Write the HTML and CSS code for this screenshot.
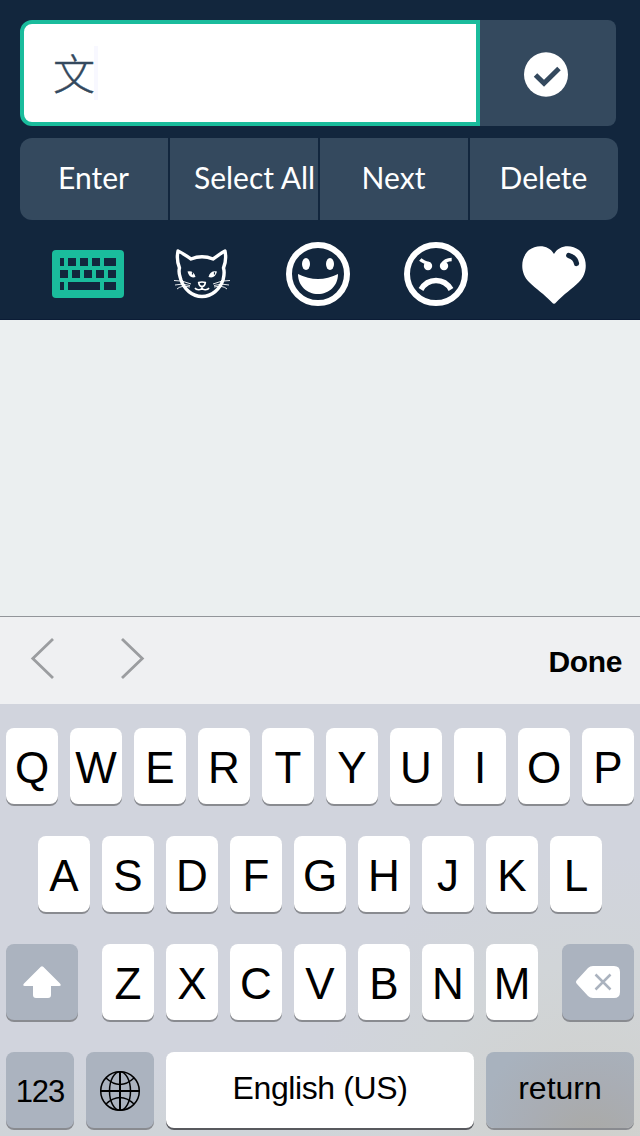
FILE: index.html
```html
<!DOCTYPE html>
<html lang="en">
<head>
<meta charset="utf-8">
<title>Keyboard input</title>
<link rel="stylesheet" href="styles.css">
</head>
<body>
<div class="app">
  <header class="panel">
    <div class="entry">
      <div class="field"><span class="typed">文</span><span class="caret"></span></div>
      <div class="confirm">
        <svg width="44" height="45" viewBox="0 0 44 45"><ellipse cx="22" cy="22.500" rx="22" ry="22.300" fill="#fff"/><path d="M11.500 23L20 31.200L35 16.500" fill="none" stroke="#34495e" stroke-width="5"/></svg>
      </div>
    </div>
    <div class="actions">
      <div class="action">Enter</div>
      <div class="action action-wide">Select All</div>
      <div class="action">Next</div>
      <div class="action">Delete</div>
    </div>
    <div class="tabs">
      <svg class="tab-keyboard" width="72" height="48" viewBox="0 0 72 48"><rect width="72" height="48" rx="4" fill="#1abc9c"/><path fill="#12263d" d="M8 8h4v8H8zM16 8h8v8h-8zM28 8h8v8h-8zM40 8h8v8h-8zM52 8h12v8H52zM8 20h8v8H8zM20 20h8v8h-8zM32 20h8v8h-8zM44 20h8v8h-8zM56 20h8v8h-8zM8 32h4v8H8zM16 32h32v8H16zM52 32h12v8H52z"/></svg>
      <svg class="tab-cat" width="56" height="52" viewBox="0 0 56 52"><path d="M5.500 20C3 14 3 8 4 3C9 5 13 8.500 17 11Q28 6.500 39 11C43 8.500 47 5 51 3C52 8 52 14 49.500 20C51 25 50 28 49 32C46 41 38 48.500 28 48.500C18 48.500 10 41 7 32C6 28 4 25 5.500 20Z" fill="none" stroke="#fff" stroke-width="3.400" stroke-linejoin="round"/><path d="M13.500 23.500Q20 22.500 21.500 29Q15.500 31 13.500 23.500ZM43 23.500Q36 22.500 34.500 29Q41 31 43 23.500Z" fill="#fff"/><path d="M18.500 24.300v2.200M40.500 24.300v2.200" stroke="#12263d" stroke-width="1.200"/><path d="M24.700 34.600Q28 33.400 31.300 34.600Q31 38 28 38.600Q25 38 24.700 34.600ZM28 38.600V40Q27 42 24.500 41.800T21 40M28 40Q29 42 31.500 41.800T35 40" fill="none" stroke="#fff" stroke-width="1.600"/><path d="M17 36Q8 32 0 32.500M16 37.500Q8 35 1 37M16 39Q7 37 3 41M39 36Q48 32 56 32.500M40 37.500Q48 35 55 37M40 39Q49 37 53 41" fill="none" stroke="#fff" stroke-width=".9"/></svg>
      <svg class="tab-smile" width="64" height="64" viewBox="0 0 64 64"><circle cx="32" cy="32" r="29" fill="none" stroke="#fff" stroke-width="6"/><ellipse cx="20" cy="22" rx="4" ry="6" fill="#fff"/><ellipse cx="44" cy="22" rx="4" ry="6" fill="#fff"/><path d="M12 32Q32 42 52 32C52 44 43 52 32 52S12 44 12 32Z" fill="#fff"/></svg>
      <svg class="tab-angry" width="64" height="64" viewBox="0 0 64 64"><circle cx="32" cy="32" r="29" fill="none" stroke="#fff" stroke-width="6"/><g fill="none" stroke="#fff"><path d="M16.300 17.500Q19 20 26 22M47.700 17.500Q41 17.500 38 23" stroke-width="3.400"/><path d="M17 47.500C24 35.500 40 35.500 47 47.500" stroke-width="5.500"/></g><circle cx="24" cy="24" r="4.200" fill="#fff"/><circle cx="40" cy="24" r="4.200" fill="#fff"/></svg>
      <svg class="tab-heart" width="64" height="58" viewBox="0 0 64 58"><path d="M32 8C37-1 49-2 57 4C66 12 66 27 57 36C50 43 42 48 34 56.500Q32 59 30 56.500C22 48 14 43 7 36C-2 27-2 12 7 4C15-2 27-1 32 8Z" fill="#fff"/><path d="M46.700 9.500Q53.500 11.500 54.500 17.500" fill="none" stroke="#12263d" stroke-width="5.200" stroke-linecap="round"/></svg>
    </div>
  </header>
  <main class="blank"></main>
  <div class="toolbar">
    <svg width="150" height="44" viewBox="0 0 150 44" fill="none" stroke="#9b9da0" stroke-width="2.800"><path d="M53 2L32.800 21.500L53 41M122 2L142.300 21.500L122 41"/></svg>
    <span class="done">Done</span>
  </div>
  <div class="keyboard">
    <div class="row">
      <div class="key">Q</div><div class="key">W</div><div class="key">E</div><div class="key">R</div><div class="key">T</div><div class="key">Y</div><div class="key">U</div><div class="key">I</div><div class="key">O</div><div class="key">P</div>
    </div>
    <div class="row">
      <div class="key">A</div><div class="key">S</div><div class="key">D</div><div class="key">F</div><div class="key">G</div><div class="key">H</div><div class="key">J</div><div class="key">K</div><div class="key">L</div>
    </div>
    <div class="row row-spread">
      <div class="key dark side"><svg width="38" height="32" viewBox="0 0 38 32"><path d="M17.800.8Q19-.4 20.200.8L37 17.500Q39 20 36 20H28V29Q28 32 25 32H13Q10 32 10 29V20H2Q-1 20 1 17.500Z" fill="#fff"/></svg></div>
      <div class="letters"><div class="key">Z</div><div class="key">X</div><div class="key">C</div><div class="key">V</div><div class="key">B</div><div class="key">N</div><div class="key">M</div></div>
      <div class="key dark side"><svg width="44" height="32" viewBox="0 0 44 32"><path d="M17 0H38Q44 0 44 6V26Q44 32 38 32H17Q14 32 12 30L1 18Q-1 16 1 14L12 2Q14 0 17 0Z" fill="#fff"/><path d="M19.500 8.500L34.500 23.500M34.500 8.500L19.500 23.500" stroke="#abb3bf" stroke-width="2.500"/></svg></div>
    </div>
    <div class="row">
      <div class="key dark mode">123</div>
      <div class="key dark mode"><svg width="42" height="42" viewBox="0 0 42 42" fill="none" stroke="#000" stroke-width="1.500"><circle cx="21" cy="21" r="19.300"/><ellipse cx="21" cy="21" rx="10.500" ry="19.300"/><path d="M7 8Q21 21 35 8M7 34Q21 21 35 34"/><path d="M21 1v40M1 21h40" stroke-width="2"/></svg></div>
      <div class="key space">English (US)</div>
      <div class="key dark return">return</div>
    </div>
  </div>
</div>
</body>
</html>
```
FILE: styles.css
```css
* { box-sizing: border-box; }
body { margin: 0; font-family: "Liberation Sans", Arial, sans-serif; }
svg { display: block; flex: none; }
.app { width: 640px; height: 1136px; overflow: hidden; display: flex; flex-direction: column; }

.panel { height: 320px; background: #12263d; padding: 20px 22px 0 20px; border-bottom: 1px solid #0b1c36; }
.entry { display: flex; width: 596px; height: 106px; }
.field { width: 460px; border: 4px solid #1abc9c; border-radius: 12px 0 0 12px; background: #fff; display: flex; align-items: center; padding-left: 29px; }
.typed { font: 300 42px/60px "Noto Sans CJK SC", sans-serif; color: #34495e; margin-top: -3px; -webkit-text-stroke: .4px #34495e; }
.caret { width: 4px; height: 54px; background: #f8f8ff; margin-left: -1px; margin-top: -1px; }
.confirm { flex: 1; background: #34495e; border-radius: 0 8px 8px 0; display: flex; align-items: center; padding: 3px 0 0 44px; }
.actions { display: flex; gap: 2px; margin-top: 12px; height: 82px; border-radius: 12px; overflow: hidden; }
.action { width: 148px; background: #34495e; color: #fff; font: 30px/78px Lato, sans-serif; text-align: center; padding-right: 1px; }
.action-wide { padding-left: 24px; text-align: left; white-space: nowrap; }
.tabs { display: flex; align-items: flex-start; height: 98px; padding: 22px 0 0 32px; }
.tab-keyboard { margin-top: 8px; }
.tab-cat { margin: 6px 0 0 50px; }
.tab-smile { margin-left: 56px; }
.tab-angry { margin-left: 54px; }
.tab-heart { margin: 4px 0 0 54px; }

.blank { height: 296px; background: #ebeff0; }
.toolbar { height: 88px; background: #eff0f2; border-top: 1px solid #92959a; display: flex; justify-content: space-between; align-items: center; padding-right: 18px; }
.toolbar svg { margin-top: -4px; }
.done { font-size: 30px; font-weight: bold; letter-spacing: -.4px; padding-top: 2px; }

.keyboard { height: 432px; padding: 24px 6px 0; display: flex; flex-direction: column; gap: 32px; background: radial-gradient(circle at 590px 440px, #d0d0cc 0, #d1d5d8 180px, rgba(209, 212, 221, 0) 290px), linear-gradient(#d1d4dd 0, #d1d4dd 84%, #cfd4d8 100%); }
.row { display: flex; justify-content: center; gap: 12px; height: 76px; flex: none; }
.row-spread { justify-content: space-between; }
.letters { display: flex; gap: 12px; }
.key { width: 52px; height: 76px; border-radius: 8px; background: #fff; box-shadow: 0 2px 0 #898b90; color: #000; font-size: 44px; line-height: 79px; text-align: center; white-space: nowrap; }
.dark { background: #abb3bf; display: flex; justify-content: center; align-items: center; }
.side { width: 72px; }
.mode { width: 68px; font-size: 31px; letter-spacing: -1px; padding-top: 2px; }
.space { width: 308px; font-size: 32px; line-height: 73px; letter-spacing: -.4px; box-shadow: 0 2px 0 #58595e; }
.return { width: 148px; font-size: 32px; line-height: 73px; padding-bottom: 3px; background: radial-gradient(circle at 105px 95px, #aaa9a4 0, #a9adb4 65px, #a8b2be 120px); }
```
